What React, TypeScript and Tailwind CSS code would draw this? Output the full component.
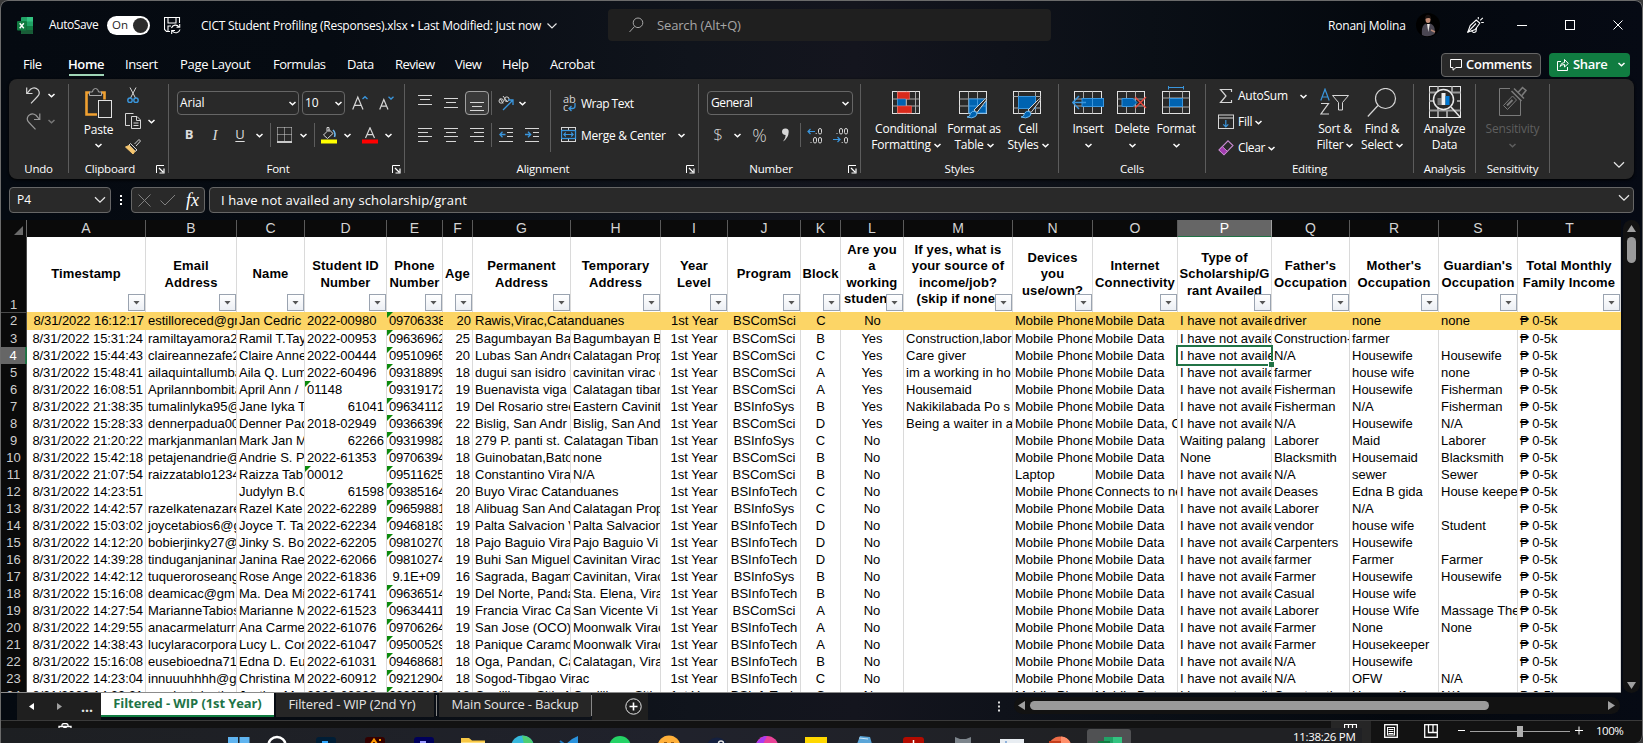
import React from 'react';

type P = { className?: string; children?: React.ReactNode };

const Chev = ({ className = '' }: P) => (
  <svg className={`w-[7px] h-[5px] shrink-0 ${className}`} viewBox="0 0 7 5" fill="none" stroke="currentColor" strokeWidth="1.5">
    <path d="M0.5 1 L3.5 3.7 L6.5 1" />
  </svg>
);

const BigChev = ({ className = '' }: P) => (
  <svg className={`w-[12px] h-[8px] shrink-0 ${className}`} viewBox="0 0 12 8" fill="none" stroke="#e4e4e4" strokeWidth="1.3">
    <path d="M1 1.2 L6 6.2 L11 1.2" />
  </svg>
);

const Sep = ({ className = '' }: P) => <div className={`w-px h-6 shrink-0 bg-[#5c5c5c] ${className}`} />;

const Icon = ({ w, h, className = '', children }: P & { w: number; h: number }) => (
  <svg width={w} height={h} viewBox={`0 0 ${w} ${h}`} className={`shrink-0 ${className}`} fill="none" stroke="#d6d6d6" strokeWidth="1">
    {children}
  </svg>
);

const Launcher = () => (
  <Icon w={9} h={9} className="ml-[5px] mr-[3px]">
    <path d="M0.5 8V0.5H8" stroke="#fff" />
    <path d="M3 3L7 7M8 3.5V8H3.5" stroke="#fff" strokeWidth="1.2" />
  </Icon>
);

function Group({ className, label, launcher, children }: P & { label: string; launcher?: boolean }) {
  return (
    <div className={`flex h-[89px] shrink-0 flex-col border-r border-[#5c5c5c] ${className}`}>
      {children}
      <div className="-mb-1 mt-auto flex h-4 items-center">
        <span className="flex-1 text-center text-[11.5px] tracking-[-0.2px]">{label}</span>
        {launcher && <Launcher />}
      </div>
    </div>
  );
}

function BigButton({ className, icon, a, b, chevron }: { className: string; icon: React.ReactNode; a: string; b?: string; chevron?: boolean }) {
  return (
    <div className={`flex flex-col items-center whitespace-nowrap leading-4 ${className}`}>
      <div className="flex h-[37px] w-full justify-center">{icon}</div>
      <div>{a}</div>
      <div className="flex h-4 items-center justify-center gap-[3px]">
        {b && <span>{b}</span>}
        {chevron && <Chev />}
      </div>
    </div>
  );
}

const Lines = ({ className = '', xs, dy = 0 }: { className?: string; xs: [number, number, number][]; dy?: number }) => (
  <Icon w={14} h={16} className={className}>
    {xs.map(([y, x1, x2]) => (
      <path key={y} d={`M${x1} ${y + dy + 0.5}H${x2}`} />
    ))}
  </Icon>
);

const GridLines = ({ x, y, w, h, cols, rows }: { x: number; y: number; w: number; h: number; cols: number[]; rows: number[] }) => (
  <>
    <rect x={x} y={y} width={w} height={h} stroke="#e2e2e2" />
    {cols.map((c) => <path key={'c' + c} d={`M${c} ${y}V${y + h}`} stroke="#a8a8a8" />)}
    {rows.map((r) => <path key={'r' + r} d={`M${x} ${r}H${x + w}`} stroke="#a8a8a8" />)}
  </>
);

const Brush = () => (
  <>
    <path d="M15 19L25.5 8.5Q28 6.5 27.5 9L18 21.5Z" fill="#292929" stroke="#d6d6d6" />
    <path d="M8 26Q11 26 11.5 22.5Q13 19 16.5 20.5Q19.5 23 16.5 25.5Q13 28 8 26Z" fill="#0063b1" stroke="#6cb8f0" />
  </>
);

const cols = 'grid grid-cols-[26px_119px_91px_68px_82px_56px_30px_98px_90px_67px_73px_40px_63px_109px_80px_85px_94px_78px_89px_79px_103px]';
const letters = 'ABCDEFGHIJKLMNOPQRST'.split('');

const heads: string[][] = [
  ['Timestamp'], ['Email', 'Address'], ['Name'], ['Student ID', 'Number'], ['Phone', 'Number'], ['Age'],
  ['Permanent', 'Address'], ['Temporary', 'Address'], ['Year', 'Level'], ['Program'], ['Block'],
  ['Are you', 'a', 'working', 'student?'], ['If yes, what is', 'your source of', 'income/job?', '(skip if none)'],
  ['Devices', 'you', 'use/own?'], ['Internet', 'Connectivity'], ['Type of', 'Scholarship/G', 'rant Availed'],
  ["Father's", 'Occupation'], ["Mother's", 'Occupation'], ["Guardian's", 'Occupation'], ['Total Monthly', 'Family Income'],
];

const MP = 'Mobile Phone';
const MD = 'Mobile Data';
const IH = 'I have not availe';
const CS = 'BSComSci';
const IS = 'BSInfoSys';
const IT = 'BSInfoTech';

// time, email, name, id, phone, age, permanent, temporary, program, block, working, job, device, internet, scholarship, father, mother, guardian
const rows: string[][] = [
  ['16:12:17', 'estilloreced@gr', 'Jan Cedric', '2022-00980', '09706338', '20', 'Rawis,Virac,Catanduanes', '', CS, 'C', 'No', '', MP, MD, IH, 'driver', 'none', 'none'],
  ['15:31:24', 'ramiltayamora2', 'Ramil T.Tay', '2022-00953', '09636962', '25', 'Bagumbayan Ba', 'Bagumbayan B', CS, 'B', 'Yes', 'Construction,labor', MP, MD, IH, 'Construction-', 'farmer', ''],
  ['15:44:43', 'claireannezafe2', 'Claire Anne', '2022-00444', '09510965', '20', 'Lubas San Andre', 'Calatagan Prop', CS, 'C', 'Yes', 'Care giver', MP, MD, IH, 'N/A', 'Housewife', 'Housewife'],
  ['15:48:41', 'ailaquintallumba', 'Aila Q. Lum', '2022-60496', '09318899', '18', 'dugui san isidro v', 'cavinitan virac c', CS, 'A', 'Yes', 'im a working in ho', MP, MD, IH, 'farmer', 'house wife', 'none'],
  ['16:08:51', 'Aprilannbombita', 'April Ann /', '01148', '09319172', '19', 'Buenavista viga c', 'Calatagan tibar', CS, 'A', 'Yes', 'Housemaid', MP, MD, IH, 'Fisherman', 'Housewife', 'Fisherman'],
  ['21:38:35', 'tumalinlyka95@', 'Jane Iyka T', '61041', '09634112', '19', 'Del Rosario stree', 'Eastern Cavinit', IS, 'B', 'Yes', 'Nakikilabada Po s', MP, MD, IH, 'Fisherman', 'N/A', 'Fisherman'],
  ['15:28:33', 'dennerpadua00', 'Denner Pad', '2018-02949', '09366396', '22', 'Bislig, San Andr', 'Bislig, San And', CS, 'D', 'Yes', 'Being a waiter in a', MP, 'Mobile Data, C', IH, 'N/A', 'Housewife', 'N/A'],
  ['21:20:22', 'markjanmanlan', 'Mark Jan M', '62266', '09319982', '18', '279 P. panti st. Calatagan Tiban', '', IS, 'C', 'No', '', MP, MD, 'Waiting palang', 'Laborer', 'Maid', 'Laborer'],
  ['15:42:18', 'petajenandrie@', 'Andrie S. P', '2022-61353', '09706394', '18', 'Guinobatan,Bato', 'none', CS, 'B', 'No', '', MP, MD, 'None', 'Blacksmith', 'Housemaid', 'Blacksmith'],
  ['21:07:54', 'raizzatablo1234', 'Raizza Tab', '00012', '09511625', '18', 'Constantino Vira', 'N/A', CS, 'B', 'No', '', 'Laptop', MD, IH, 'N/A', 'sewer', 'Sewer'],
  ['14:23:51', '', 'Judylyn B.C', '61598', '09385164', '20', 'Buyo Virac Catanduanes', '', IT, 'C', 'No', '', MP, 'Connects to ne', IH, 'Deases', 'Edna B gida', 'House keepe'],
  ['14:42:57', 'razelkatenazare', 'Razel Kate', '2022-62289', '09659881', '18', 'Alibuag San And', 'Calatagan Prop', IS, 'C', 'No', '', MP, MD, IH, 'Laborer', 'N/A', ''],
  ['15:03:02', 'joycetabios6@g', 'Joyce T. Ta', '2022-62234', '09468183', '19', 'Palta Salvacion V', 'Palta Salvacion', IT, 'D', 'No', '', MP, MD, IH, 'vendor', 'house wife', 'Student'],
  ['14:12:20', 'bobierjinky27@', 'Jinky S. Bo', '2022-62205', '09810270', '18', 'Pajo Baguio Vira', 'Pajo Baguio Vi', IT, 'D', 'No', '', MP, MD, IH, 'Carpenters', 'Housewife', ''],
  ['14:39:28', 'tinduganjaninar', 'Janina Rae', '2022-62066', '09810274', '19', 'Buhi San Miguel', 'Cavinitan Virac', IT, 'D', 'No', '', MP, MD, IH, 'farmer', 'Farmer', 'Farmer'],
  ['14:42:12', 'tuqueroroseang', 'Rose Ange', '2022-61836', '9.1E+09', '16', 'Sagrada, Bagam', 'Cavinitan, Virac', IS, 'B', 'No', '', MP, MD, IH, 'Farmer', 'Housewife', 'Housewife'],
  ['15:16:08', 'deamicac@gm', 'Ma. Dea Mi', '2022-61741', '09636514', '19', 'Del Norte, Panda', 'Sta. Elena, Vira', IT, 'B', 'No', '', MP, MD, IH, 'Casual', 'House wife', ''],
  ['14:27:54', 'MarianneTabios', 'Marianne M', '2022-61523', '09634411', '19', 'Francia Virac Ca', 'San Vicente Vi', CS, 'A', 'No', '', MP, MD, IH, 'Laborer', 'House Wife', 'Massage The'],
  ['14:29:55', 'anacarmelaturre', 'Ana Carme', '2022-61076', '09706264', '19', 'San Jose (OCO)', 'Moonwalk Virac', IT, 'A', 'No', '', MP, MD, IH, 'Farmer', 'None', 'None'],
  ['14:38:43', 'lucylaracorpora', 'Lucy L. Cor', '2022-61047', '09500529', '18', 'Panique Caramo', 'Moonwalk Virac', IT, 'A', 'No', '', MP, MD, IH, 'Farmer', 'Housekeeper', ''],
  ['15:16:08', 'eusebioedna71', 'Edna D. Eu', '2022-61031', '09468681', '18', 'Oga, Pandan, Ca', 'Calatagan, Vira', IT, 'B', 'No', '', MP, MD, IH, 'N/A', 'Housewife', ''],
  ['14:23:04', 'innuuuhhhh@gr', 'Christina M', '2022-60912', '09212904', '18', 'Sogod-Tibgao Virac', '', IT, 'C', 'No', '', MP, MD, IH, 'N/A', 'OFW', 'N/A'],
  ['14:29:21', 'maniestaiusti', 'Justine Ma', '2022-60898', '09305129', '18', 'Canlilban, Sitio M', 'Canlilban, Sitio', IT, 'C', 'No', '', MP, MD, IH, 'Construction', 'Housewife', 'N/A'],
];

function SheetRow({ r, i }: { r: string[]; i: number }) {
  const n = i + 2;
  const values = ['8/31/2022 ' + r[0], ...r.slice(1, 8), '1st Year', ...r.slice(8), '₱ 0-5k'];
  const spill = r[7] === '';
  const yellow = i === 0;
  return (
    <div className={`${cols} ${yellow ? 'h-[18px]' : 'h-[17px]'} shrink-0`}>
      <div
        className={`border-b text-center text-[13px] ${yellow ? 'border-t leading-[16px]' : 'leading-[17px]'} ${
          n === 4 ? 'border-b-[#8a8a8a] border-r-2 border-r-[#217346] bg-[#666] text-white' : 'border-r border-[#4a4a4a] bg-[#0a0a0a] text-[#cfcfcf]'
        }`}
      >
        {n}
      </div>
      {values.map((v, c) => {
        if (c === 7 && spill) return null;
        const right = c === 0 || c === 5 || (c === 3 && v.length === 5 && v[0] === '6') || (c === 4 && v.includes('E'));
        const center = c >= 8 && c <= 11;
        const flag = (c === 4 && !right) || (c === 3 && v.length === 5 && v[0] === '0');
        const sel = n === 4 && c === 15;
        return (
          <div
            key={c}
            className={`relative border-b ${yellow ? 'border-b-[#a39a80] bg-[#fcd566] leading-[18px]' : 'border-r border-[#dadada] bg-white leading-[17px]'} ${
              c === 6 && spill ? 'col-span-2' : ''
            } ${sel ? 'z-10' : ''}`}
          >
            <div
              className={`h-full overflow-hidden whitespace-pre px-[2px] ${right ? 'text-right' : center ? 'text-center' : ''} ${
                c === 0 ? 'tracking-[-0.08px]' : c === 4 ? 'tracking-[-0.2px]' : ''
              }`}
            >
              {v}
            </div>
            {flag && <div className="absolute left-0 top-0 h-[6px] w-[6px] bg-[#0c8a0c] [clip-path:polygon(0_0,100%_0,0_100%)]" />}
            {sel && (
              <div className="absolute -bottom-[2px] -left-[2px] -right-[2px] -top-[2px] border-2 border-[#217346]">
                <div className="absolute -bottom-[3px] -right-[3px] h-[6px] w-[6px] border-l border-t border-white bg-[#217346]" />
              </div>
            )}
          </div>
        );
      })}
    </div>
  );
}

function TitleBar() {
  return (
    <div className="flex h-[50px] items-center pl-[17px] text-[12px] text-white">
      <svg width="16" height="17" viewBox="0 0 16 17" className="shrink-0">
        <rect x="4" y="0" width="12" height="17" rx="1" fill="#21a366" />
        <rect x="10" y="0" width="6" height="4.5" fill="#33c481" />
        <rect x="4" y="4.5" width="6" height="4.5" fill="#107c41" />
        <rect x="4" y="9" width="12" height="8" rx="1" fill="#185c37" />
        <rect x="10" y="9" width="6" height="4" fill="#107c41" />
        <rect x="0" y="4" width="9.5" height="9.5" rx="1" fill="#107c41" />
        <path d="M2.7 6.3L6.8 11.3M6.8 6.3L2.7 11.3" stroke="#fff" strokeWidth="1.4" />
      </svg>
      <span className="ml-4 w-[50px] whitespace-nowrap tracking-[-0.4px]">AutoSave</span>
      <div className="ml-2 flex h-[19px] w-[43px] items-center justify-between rounded-full bg-white pl-[5px] pr-[2px] text-[#1e1e1e]">
        <span className="text-[11.5px]">On</span>
        <span className="h-[15px] w-[15px] rounded-full bg-[#2b2b2b]" />
      </div>
      <Icon w={17} h={17} className="ml-[14px]">
        <g stroke="#fff" strokeWidth="1.1">
          <path d="M6 14.5H2.5L0.5 12.5V0.5H15.5V6" />
          <path d="M4 0.5V6H12V0.5" />
          <path d="M4 14V9H7" />
          <path d="M7.5 11A4.2 4.2 0 0 1 15 10M15.7 7V10.3H12.5M16 12.5A4.2 4.2 0 0 1 8.5 14M7.7 17V13.5H11" />
        </g>
      </Icon>
      <span className="ml-[20px] mt-[2px] w-[342px] whitespace-nowrap text-[12px] tracking-[-0.25px]">CICT Student Profiling (Responses).xlsx • Last Modified: Just now</span>
      <BigChev className="ml-[3px] mt-px scale-90" />
      <div className="ml-[50px] flex h-8 w-[443px] items-center rounded bg-[#1f1f1f] pl-[21px] text-[13px] text-[#a6a6a6]">
        <Icon w={15} h={16}>
          <circle cx="9" cy="5.8" r="4.8" stroke="#a6a6a6" />
          <path d="M5.5 9.5L0.5 15" stroke="#a6a6a6" />
        </Icon>
        <span className="ml-[13px] mt-px tracking-[-0.15px]">Search (Alt+Q)</span>
      </div>
      <span className="ml-[277px] mt-[2px] w-[77px] whitespace-nowrap tracking-[-0.2px]">Ronanj Molina</span>
      <svg width="24" height="24" viewBox="0 0 24 24" className="ml-[11px] shrink-0">
        <circle cx="12" cy="12" r="12" fill="#000" />
        <path d="M6 22Q5 12 10 10.5L12 13L14 10.5Q20 12 18.5 21Q12 25 6 22Z" fill="#4a4652" />
        <path d="M11 11L12.3 19L13.8 11Z" fill="#e8e4e4" />
        <ellipse cx="12" cy="6.5" rx="2.5" ry="3.5" fill="#c08a74" />
        <path d="M9 6Q9 1.8 12 1.8T15 6Q13 3.8 9 6Z" fill="#1a1210" />
        <path d="M15 17L19 19" stroke="#b98a78" strokeWidth="1.5" />
      </svg>
      <Icon w={17} h={17} className="ml-[27px]">
        <g stroke="#fff" strokeWidth="1.1">
          <path d="M0.8 15.2L3.2 8.5L9.2 3L12.8 6.2L8.2 12.5Z" />
          <path d="M0.8 15.2L9 6.5M4.5 13.8Q6.5 16.8 9 14.5L9.5 11" />
          <path d="M11.3 0V2.2M13.2 3.3L15.8 0.8M14.2 5.5H16.8" />
        </g>
      </Icon>
      <div className="ml-[33px] h-px w-[10px] bg-white" />
      <div className="ml-[38px] h-[10px] w-[10px] border border-white" />
      <Icon w={10} h={10} className="ml-[38px]">
        <path d="M0.5 0.5L9.5 9.5M9.5 0.5L0.5 9.5" stroke="#fff" />
      </Icon>
    </div>
  );
}

function Tabs() {
  return (
    <div className="flex h-[29px] items-center pl-[23px] text-[13px] text-white">
      <span className="w-[19px] tracking-[-0.5px]">File</span>
      <span className="ml-[26px] w-[37px] font-semibold tracking-[-0.4px] shadow-[0_3px_0_-1px_#9fd5b7]">Home</span>
      <span className="ml-5 w-8 tracking-[-0.4px]">Insert</span>
      <span className="ml-[23px] w-[71px] whitespace-nowrap tracking-[-0.3px]">Page Layout</span>
      <span className="ml-[22px] w-[53px] tracking-[-0.5px]">Formulas</span>
      <span className="ml-[21px] w-[27px] tracking-[-0.4px]">Data</span>
      <span className="ml-[21px] w-[40px] tracking-[-0.5px]">Review</span>
      <span className="ml-5 w-[27px] tracking-[-0.5px]">View</span>
      <span className="ml-5 w-[27px] tracking-[-0.4px]">Help</span>
      <span className="ml-[21px] w-[46px] tracking-[-0.4px]">Acrobat</span>
      <div className="ml-auto flex h-6 w-[100px] items-center justify-center gap-1 rounded border border-[#666] bg-[#292929] font-semibold tracking-[-0.3px]">
        <Icon w={12} h={12}>
          <path d="M0.5 0.5H11.5V8.5H6L3 11.2V8.5H0.5Z" stroke="#fff" />
        </Icon>
        Comments
      </div>
      <div className="ml-2 mr-[13px] flex h-6 w-[81px] items-center rounded bg-[#107c41] pl-2 font-semibold tracking-[-0.3px]">
        <Icon w={12} h={13}>
          <path d="M4 3.5H0.5V12.5H10.5V9" stroke="#fff" />
          <path d="M3 8.5Q4 4.5 7.5 4.5V1.5L11.3 5.5L7.5 9V6.5Q4.5 6.5 3 8.5Z" stroke="#fff" />
        </Icon>
        <span className="ml-1">Share</span>
        <Chev className="ml-auto mr-[5px]" />
      </div>
    </div>
  );
}

function Ribbon() {
  return (
    <div className="mx-[9px] flex h-[100px] w-[1625px] rounded-lg bg-[#292929] pt-[5px] text-[11.5px] tracking-[-0.15px] text-white shadow-[0_1px_3px_#000]">
      <Group className="w-[60px]" label="Undo">
        <div className="mt-[2px] flex h-[18px] items-center pl-[17px]">
          <Icon w={15} h={17}>
            <path d="M0.7 0.5V6.5H6.5" strokeWidth="1.2" />
            <path d="M1 6.3L4.5 2.3Q8.5 -0.8 12 2.7Q14.8 6.5 11.5 9.5L5 16.3" strokeWidth="1.2" />
          </Icon>
          <Chev className="ml-[7px]" />
        </div>
        <div className="mt-[8px] flex h-[18px] items-center pl-[17px] text-[#777]">
          <Icon w={15} h={17}>
            <path d="M13.8 0.5V6.5H8" strokeWidth="1.2" stroke="#999" />
            <path d="M13.5 6.3L10 2.3Q6 -0.8 2.5 2.7Q-0.3 6.5 3 9.5L9.5 16.3" strokeWidth="1.2" stroke="#999" />
          </Icon>
          <Chev className="ml-[7px]" />
        </div>
      </Group>
      <Group className="w-[100px]" label="Clipboard" launcher>
        <div className="flex">
          <div className="ml-[14px] flex w-[31px] flex-col items-center">
            <Icon w={28} h={31} className="mt-[4px]">
              <path d="M12 26.5H1.5V4.500H5M16 4.500H19.5V11.5" stroke="#f0a030" strokeWidth="2.6" />
              <path d="M4.500 7.500V4H7.5Q7.500 0.500 10.500 0.500T13.500 4H16.500V7.500Z" fill="#292929" stroke="#a8a8a8" />
              <rect x="13.5" y="12.5" width="13" height="17" fill="#292929" stroke="#e2e2e2" />
            </Icon>
            <span className="mt-[3px] text-[12px] leading-4 tracking-[-0.25px]">Paste</span>
            <Chev className="mt-[5px]" />
          </div>
          <div className="ml-[11px] flex flex-col">
            <Icon w={16} h={17} className="mt-[3px]">
              <path d="M5 0.5L10.5 11M11 0.5L5.5 11" />
              <circle cx="5" cy="13.2" r="2.2" stroke="#3a96dd" strokeWidth="1.4" />
              <circle cx="11" cy="13.2" r="2.2" stroke="#3a96dd" strokeWidth="1.4" />
            </Icon>
            <div className="mt-[9px] flex items-center">
              <Icon w={17} h={17}>
                <path d="M5 12.5H0.5V0.5H8.5" />
                <path d="M6.5 3.5H12L15.5 7V15.5H6.5ZM11.5 3.5V7.5H15.5M8.5 10H13.5M8.5 12.5H13.5" />
              </Icon>
              <Chev className="ml-[6px]" />
            </div>
            <Icon w={17} h={16} className="mt-[9px]">
              <path d="M9.5 5L14 0.5L15.5 2L11 7" />
              <path d="M5.5 4.5L12 11L10 12.5L4 6Z" />
              <path d="M4 6.5L0.5 8L8 15L10 12.3Z" fill="#f6c66f" stroke="#f6c66f" />
            </Icon>
          </div>
        </div>
      </Group>
      <Group className="w-[236px]" label="Font" launcher>
        <div className="mt-[7px] flex h-6 items-center">
          <div className="ml-[8px] flex h-6 w-[122px] items-center justify-between rounded border border-[#666] pl-[2px] pr-[2px] text-[12px]">
            Arial <Chev />
          </div>
          <div className="ml-[3px] flex h-6 w-[43px] items-center justify-between rounded border border-[#666] pl-[2px] pr-[2px] text-[12px]">
            10 <Chev />
          </div>
          <Icon w={16} h={16} className="ml-[7px]">
            <path d="M0.7 14.5L5.8 2L11 14.5M2.5 10.3H9.2" strokeWidth="1.2" />
            <path d="M10.5 4L13 1.7L15.5 4" stroke="#3a96dd" strokeWidth="1.3" />
          </Icon>
          <Icon w={16} h={16} className="ml-[11px]">
            <path d="M0.7 14.5L4.8 4.5L9 14.5M2.2 11.2H7.5" strokeWidth="1.2" />
            <path d="M9.5 1.7L12 4L14.5 1.7" stroke="#3a96dd" strokeWidth="1.3" />
          </Icon>
        </div>
        <div className="mt-[8px] flex h-6 items-center text-[13px] text-[#dcdcdc]">
          <span className="ml-[13px] w-[14px] text-center font-bold">B</span>
          <span className="ml-[12px] w-[14px] text-center font-['Liberation_Serif',serif] text-[15px] italic">I</span>
          <span className="ml-[11px] w-[14px] text-center underline underline-offset-2">U</span>
          <Chev className="ml-[9px] text-white" />
          <Sep className="ml-[7px]" />
          <Icon w={16} h={16} className="ml-[6px]">
            <path d="M0.5 0.5H15M0.5 0.5V14M14.5 0.5V14M7.5 0.5V14M0.5 7.5H15" strokeDasharray="1 1" />
            <path d="M0 15H15" stroke="#fff" strokeWidth="1.5" />
          </Icon>
          <Chev className="ml-[7px] text-white" />
          <Sep className="ml-[7px]" />
          <Icon w={16} h={17} className="ml-[6px]">
            <path d="M2.5 8L8 2.5L12 6.5L6.5 11.5Z M8 5V0.5H6V4" />
            <path d="M12 3Q15 6 13.5 10" stroke="#6cb8f0" strokeWidth="1.6" />
            <rect x="0" y="12.5" width="16" height="4" fill="#ffff00" stroke="none" />
          </Icon>
          <Chev className="ml-[7px] text-white" />
          <Icon w={16} h={17} className="ml-[11px]">
            <path d="M3.5 11L8 0.8L12.5 11M5 7.6H11" strokeWidth="1.2" />
            <rect x="0" y="12.5" width="16" height="4" fill="#ff0000" stroke="none" />
          </Icon>
          <Chev className="ml-[7px] text-white" />
        </div>
      </Group>
      <Group className="w-[294px]" label="Alignment" launcher>
        <div className="flex">
          <div className="flex w-[145px] flex-col">
            <div className="mt-[7px] flex h-6 items-center">
              <Lines className="ml-[13px]" xs={[[0, 0, 14], [4, 2, 12], [9, 0, 14]]} />
              <Lines className="ml-[12px]" xs={[[3, 0, 14], [7, 2, 12], [12, 0, 14]]} />
              <div className="ml-[7px] flex h-6 w-6 items-center justify-center rounded border border-[#a0a0a0] bg-[#3a3a3a]">
                <Lines xs={[[7, 0, 14], [11, 2, 12], [15, 0, 14]]} />
              </div>
              <Sep className="ml-[2px]" />
              <Icon w={16} h={16} className="ml-[6px]">
                <circle cx="3.2" cy="6" r="2.2" />
                <path d="M5 8.5L2.2 3.5M5 1L9.5 7" />
                <circle cx="8.8" cy="4.2" r="2.3" />
                <path d="M5 15L15 5M15 10V5H10" stroke="#3a96dd" strokeWidth="1.3" />
              </Icon>
              <Chev className="ml-[5px]" />
            </div>
            <div className="mt-[8px] flex h-6 items-center">
              <Lines className="ml-[13px]" xs={[[1, 0, 14], [5, 0, 10], [9, 0, 14], [14, 0, 10]]} />
              <Lines className="ml-[12px]" xs={[[1, 0, 14], [5, 2, 12], [9, 0, 14], [14, 2, 12]]} />
              <Lines className="ml-[12px]" xs={[[1, 0, 14], [5, 4, 14], [9, 0, 14], [14, 4, 14]]} />
              <Sep className="ml-[7px]" />
              <Icon w={14} h={16} className="ml-[7px]">
                <path d="M0 1.5H14M8 5.5H14M8 9.5H14M0 14.5H14" />
                <path d="M6.5 7.5H1M3.5 4.8L0.8 7.5L3.5 10.2" stroke="#3a96dd" strokeWidth="1.3" />
              </Icon>
              <Icon w={14} h={16} className="ml-[12px]">
                <path d="M0 1.5H14M8 5.5H14M8 9.5H14M0 14.5H14" />
                <path d="M0 7.5H5.5M3 4.8L5.7 7.5L3 10.2" stroke="#3a96dd" strokeWidth="1.3" />
              </Icon>
            </div>
          </div>
          <div className="mt-[6px] h-[62px] w-px bg-[#5c5c5c]" />
          <div className="flex flex-col text-[12px]">
            <div className="mt-[7px] flex h-6 items-center whitespace-nowrap">
              <div className="ml-[12px] flex w-[14px] flex-col text-[11px] leading-[8px] text-[#d6d6d6]">
                <span>ab</span>
                <span className="flex">
                  c
                  <Icon w={8} h={9}>
                    <path d="M7 0V3Q7 5.5 4.5 5.5H1M3.5 3L1 5.5L3.5 8" stroke="#3a96dd" strokeWidth="1.3" />
                  </Icon>
                </span>
              </div>
              <span className="ml-1 mt-[2px] tracking-[-0.5px]">Wrap Text</span>
            </div>
            <div className="mt-[8px] flex h-6 items-center whitespace-nowrap">
              <Icon w={16} h={16} className="ml-[10px]">
                <rect x="0.5" y="0.5" width="14" height="14" />
                <path d="M7.5 0.5V15" />
                <rect x="0.5" y="3.5" width="14" height="8" fill="#292929" stroke="#3a96dd" strokeWidth="1.3" />
                <path d="M2.5 7.5H12.5M4.8 5.5L2.8 7.5L4.8 9.5M10.2 5.5L12.2 7.5L10.2 9.5" stroke="#3a96dd" strokeWidth="1.1" />
              </Icon>
              <span className="ml-1 mt-px w-[85px] tracking-[-0.25px]">Merge &amp; Center</span>
              <Chev className="ml-[12px]" />
            </div>
          </div>
        </div>
      </Group>
      <Group className="w-[162px]" label="Number" launcher>
        <div className="ml-[8px] mt-[7px] flex h-6 w-[146px] items-center justify-between rounded border border-[#666] px-[3px] text-[12px]">
          <span className="tracking-[-0.4px]">General</span> <Chev />
        </div>
        <div className="mt-[8px] flex h-6 items-center text-[#d6d6d6]">
          <span className="ml-[12px] w-[14px] text-center text-[17px] font-light">$</span>
          <Chev className="ml-[9px] text-white" />
          <span className="ml-[10px] w-[17px] text-center text-[18px] font-light">%</span>
          <Icon w={10} h={16} className="ml-[13px]">
            <path d="M1 4.5A3.2 3.2 0 1 1 7.7 5Q7.5 11 2 14.5Q5 11 4.6 8Q1 7.8 1 4.5Z" fill="#d6d6d6" stroke="none" />
          </Icon>
          <Sep className="ml-[9px]" />
          <Icon w={16} h={17} className="ml-[6px]">
            <path d="M8 4.5H1M3.5 2L1 4.5L3.5 7" stroke="#3a96dd" strokeWidth="1.2" />
            <rect x="11.5" y="1.5" width="3" height="5.5" rx="1.5" />
            <rect x="6.5" y="10.5" width="3" height="5.5" rx="1.5" />
            <rect x="11.500" y="10.500" width="3" height="5.500" rx="1.500" />
            <path d="M3.5 15.5H4.5M8.7 6.5H9.7" />
          </Icon>
          <Icon w={16} h={17} className="ml-[10px]">
            <path d="M0 12.5H7M4.5 10L7 12.5L4.5 15" stroke="#3a96dd" strokeWidth="1.2" />
            <rect x="6.5" y="1.5" width="3" height="5.5" rx="1.5" />
            <rect x="11.5" y="1.5" width="3" height="5.5" rx="1.5" />
            <rect x="11.5" y="10.5" width="3" height="5.5" rx="1.5" />
            <path d="M3.5 6.5H4.5M8.7 15.5H9.7" />
          </Icon>
        </div>
      </Group>
      <Group className="w-[198px] text-[12px]" label="Styles">
        <div className="flex">
          <BigButton className="ml-[10px] w-[70px] tracking-[-0.2px]" a="Conditional" b="Formatting" chevron icon={
            <Icon w={28} h={24} className="mt-[7px]">
              <GridLines x={0.5} y={0.5} w={27} h={22} cols={[5.5, 14.5, 23.5]} rows={[8, 15]} />
              <rect x="5.5" y="1" width="12" height="7" fill="#d92a1c" stroke="#f0695f" strokeWidth=".6" />
              <rect x="5.5" y="8" width="8" height="7" fill="#0063b1" stroke="#3a96dd" strokeWidth=".6" />
              <rect x="5.5" y="15" width="14" height="7" fill="#d92a1c" stroke="#f0695f" strokeWidth=".6" />
            </Icon>} />
          <BigButton className="w-[66px] tracking-[-0.25px]" a="Format as" b="Table" chevron icon={
            <Icon w={30} h={28} className="mt-[7px]">
              <GridLines x={0.5} y={0.5} w={27} h={22} cols={[9.5, 18.5]} rows={[8, 15]} />
              <rect x="10" y="8" width="17" height="14" fill="#0063b1" stroke="#3a96dd" />
              <path d="M18.5 8V22M10 15H27" stroke="#3a96dd" />
              <Brush />
            </Icon>} />
          <BigButton className="w-[42px] tracking-[-0.2px]" a="Cell" b="Styles" chevron icon={
            <Icon w={30} h={28} className="mt-[7px]">
              <GridLines x={0.5} y={0.5} w={27} h={22} cols={[5.5, 22.5]} rows={[5.5, 17]} />
              <rect x="5.5" y="5.5" width="17" height="12" fill="#0063b1" stroke="#3a96dd" />
              <Brush />
            </Icon>} />
        </div>
      </Group>
      <Group className="w-[147px] text-[12px]" label="Cells">
        <div className="flex">
          <BigButton className="ml-[7px] w-[44px] tracking-[-0.2px]" a="Insert" chevron icon={
            <Icon w={32} h={24} className="mt-[7px]">
              <GridLines x={2.5} y={0.5} w={27} h={22} cols={[11.5, 20.5]} rows={[8, 15]} />
              <rect x="10" y="7.5" width="21.5" height="8" fill="#0063b1" stroke="#3a96dd" />
              <path d="M20.5 8V15" stroke="#3a96dd" />
              <path d="M14 11.5H1M7 5L0.8 11.5L7 18" stroke="#3a96dd" strokeWidth="1.5" />
            </Icon>} />
          <BigButton className="w-[44px] tracking-[-0.2px]" a="Delete" chevron icon={
            <Icon w={30} h={24} className="mt-[7px]">
              <GridLines x={0.5} y={0.5} w={27} h={22} cols={[9.5, 18.5]} rows={[8, 15]} />
              <path d="M5 7.5H16L20 11.5L16 15.5H5Z" fill="#0063b1" stroke="#3a96dd" />
              <path d="M18 6L29 17M29 6L18 17" stroke="#ef4b40" strokeWidth="1.4" />
            </Icon>} />
          <BigButton className="w-[44px] tracking-[-0.2px]" a="Format" chevron icon={
            <Icon w={28} h={29} className="mt-[2px]">
              <GridLines x={0.5} y={5.5} w={27} h={22} cols={[7.5, 20.5]} rows={[12, 21]} />
              <rect x="7.5" y="12.5" width="13" height="8" fill="#0063b1" stroke="#3a96dd" />
              <path d="M6.5 1.5H21.5M6.5 0V3.5M21.5 0V3.5" stroke="#3a96dd" />
            </Icon>} />
        </div>
      </Group>
      <Group className="w-[208px] text-[12px]" label="Editing">
        <div className="flex">
          <div className="-mt-px ml-[12px] flex w-[92px] flex-col tracking-[-0.25px]">
            <div className="flex h-[26px] items-center">
              <Icon w={16} h={16}>
                <path d="M13.5 4V1.5H2.5L8 8L2.5 14.5H13.5V12" strokeWidth="1.2" />
              </Icon>
              <span className="ml-1 w-[50px]">AutoSum</span>
              <Chev className="ml-[12px]" />
            </div>
            <div className="flex h-[26px] items-center">
              <Icon w={16} h={16}>
                <rect x="0.5" y="1" width="15" height="13.5" />
                <path d="M0.5 4H15.5" />
                <path d="M7.8 6V13M5.3 10.3L7.8 12.8L10.3 10.3" stroke="#3a96dd" strokeWidth="1.2" />
              </Icon>
              <span className="ml-1 mr-[3px]">Fill</span>
              <Chev />
            </div>
            <div className="flex h-[26px] items-center">
              <Icon w={16} h={16}>
                <path d="M1 10L10 0.8L15 5.5L6 14.8Z" stroke="#c78ad0" strokeWidth="1.1" />
                <path d="M1 10L4.3 6.5L9.3 11.3L6 14.8Z" fill="#a23bb0" stroke="#c78ad0" />
              </Icon>
              <span className="ml-1 mr-[3px] tracking-[-0.4px]">Clear</span>
              <Chev />
            </div>
          </div>
          <BigButton className="w-[50px] tracking-[-0.2px]" a="Sort &" b="Filter" chevron icon={
            <Icon w={30} h={28} className="mt-[4px]">
              <path d="M0.8 12.5L5 1.2L9.2 12.5M2.2 9H7.8" stroke="#3a96dd" strokeWidth="1.2" />
              <path d="M1 15.5H8.5L1 26H9" strokeWidth="1.2" />
              <path d="M12.5 7.5H28.5L22.5 14.5V22H18.5V14.5Z" />
            </Icon>} />
          <BigButton className="w-[44px] tracking-[-0.2px]" a="Find &" b="Select" chevron icon={
            <Icon w={30} h={30} className="mt-[4px]">
              <circle cx="18.5" cy="10.5" r="10" strokeWidth="1.2" />
              <path d="M11 17.5L0.8 28.5" strokeWidth="1.2" />
            </Icon>} />
        </div>
      </Group>
      <Group className="w-[62px] text-[12px]" label="Analysis">
        <BigButton className="w-full tracking-[-0.2px]" a="Analyze" b="Data" icon={
          <Icon w={32} h={32} className="mt-[2px]">
            <rect x="0.5" y="0.5" width="31" height="31" stroke="#e8e8e8" />
            <path d="M0.5 6.5H31.5M0.5 24.5H31.5M9 0.5V31M23 0.5V6M18 24V31M0.5 15H8M28 15H31" stroke="#999" strokeWidth="2" />
            <circle cx="14.5" cy="13.5" r="10" fill="#292929" stroke="#e8e8e8" strokeWidth="1.5" />
            <path d="M22 21L31.5 31.5" stroke="#e8e8e8" strokeWidth="1.5" />
            <rect x="8.5" y="12" width="4" height="7" fill="#777" stroke="none" />
            <rect x="12.5" y="7" width="4" height="12" fill="#eee" stroke="none" />
            <rect x="16.5" y="10" width="4" height="9" fill="#0078d4" stroke="none" />
          </Icon>} />
      </Group>
      <Group className="w-[74px] text-[12px]" label="Sensitivity">
        <BigButton className="w-full tracking-[-0.2px] text-[#5f5f5f]" a="Sensitivity" chevron icon={
          <Icon w={28} h={32} className="mt-[1px]">
            <path d="M11 3.500H0.500V30.500H21.500V15" stroke="#7a7a7a" />
            <path d="M4.500 20.500L13.500 11L17.500 15L8.500 24.500Z" stroke="#7a7a7a" />
            <path d="M8 20.500L13.500 15" stroke="#7a7a7a" strokeWidth="2" />
            <path d="M12.500 6L22.500 16M15 3.500L25 13.500" stroke="#7a7a7a" strokeWidth="1.6" />
            <path d="M19 7.500L23.500 2.500L27 5.500L22.500 11" stroke="#7a7a7a" strokeWidth="1.6" />
          </Icon>} />
      </Group>
      <div className="flex flex-1 items-end justify-end pb-[10px] pr-[9px]">
        <BigChev />
      </div>
    </div>
  );
}

function FormulaBar() {
  return (
    <div className="mb-[7px] mt-[8px] flex h-[26px] items-center pl-[9px] text-[12.5px] text-white">
      <div className="flex h-[26px] w-[102px] items-center justify-between rounded border border-[#666] bg-[#292929] pl-[7px] pr-[4px]">
        <span className="text-[12px]">P4</span>
        <BigChev />
      </div>
      <Icon w={2} h={12} className="ml-[9px]">
        <path d="M1 1V3M1 5V7M1 9V11" stroke="#fff" strokeWidth="2" />
      </Icon>
      <div className="ml-[9px] flex h-[26px] w-[74px] items-center rounded border border-[#666] bg-[#292929] pl-[6px]">
        <Icon w={13} h={13}>
          <path d="M0.5 0.5L12.5 12.5M12.5 0.5L0.5 12.5" stroke="#808080" />
        </Icon>
        <Icon w={16} h={12} className="ml-[9px]">
          <path d="M0.5 6.5L5 11L15 1" stroke="#808080" />
        </Icon>
        <span className="ml-[10px] font-['Liberation_Serif',serif] text-[18px] italic leading-none">fx</span>
      </div>
      <div className="ml-[4px] flex h-[26px] w-[1425px] items-center justify-between rounded border border-[#666] bg-[#292929] pl-[11px] pr-[3px]">
        <span className="mt-px text-[13px] tracking-[0.13px]">I have not availed any scholarship/grant</span>
        <BigChev className="mb-1" />
      </div>
    </div>
  );
}

function Sheet() {
  return (
    <div className="flex h-[473px]">
      <div className="ml-px flex h-[473px] w-[1620px] flex-col overflow-hidden border-b border-[#8b8b8b] font-['Liberation_Sans',Arial,sans-serif] text-[13px] text-black">
        <div className={`${cols} h-[17px] shrink-0 bg-[#0a0a0a] text-center text-[14px] leading-[16px] text-[#d4d4d4]`}>
          <div className="flex items-end justify-end border-b border-r border-[#6a6a6a] pb-[2px] pr-[3px]">
            <div className="h-[9px] w-[9px] bg-[#6a6a6a] [clip-path:polygon(100%_0,100%_100%,0_100%)]" />
          </div>
          {letters.map((l) => (
            <div
              key={l}
              className={l === 'P' ? 'border-b-2 border-r border-b-[#217346] border-r-[#a0a0a0] bg-[#666] text-white' : l === 'T' ? 'border-b border-[#8b8b8b]' : 'border-b border-r border-b-[#8b8b8b] border-r-[#5a5a5a]'}
            >
              {l}
            </div>
          ))}
        </div>
        <div className={`${cols} h-[75px] shrink-0`}>
          <div className="flex items-end justify-center border-r border-[#4a4a4a] bg-[#0a0a0a] leading-[15px] text-[#cfcfcf]">1</div>
          {heads.map((h, c) => (
            <div key={c} className="relative flex flex-col items-center justify-center overflow-hidden whitespace-nowrap border-r border-[#dadada] bg-white text-[13px] font-bold leading-[16.5px] tracking-[0.15px]">
              {h.map((t) => <span key={t}>{t}</span>)}
              <div className="absolute bottom-[1px] right-0 flex h-[17px] w-[17px] items-center justify-center border border-[#9aa3b0] bg-gradient-to-b from-white to-[#eceff4]">
                <div className="h-[4px] w-[7px] bg-[#555] [clip-path:polygon(0_0,100%_0,50%_100%)]" />
              </div>
            </div>
          ))}
        </div>
        {rows.map((r, i) => <SheetRow key={i} r={r} i={i} />)}
      </div>
      <div className="ml-[2px] flex w-[17px] flex-col items-center rounded-full bg-[#121212] pt-[5px]">
        <div className="h-[7px] w-[9px] bg-[#a0a0a0] [clip-path:polygon(50%_0,100%_100%,0_100%)]" />
        <div className="mt-[5px] h-[26px] w-[9px] rounded-full bg-[#9a9a9a]" />
        <div className="mb-[4px] mt-auto h-[7px] w-[9px] bg-[#a0a0a0] [clip-path:polygon(0_0,100%_0,50%_100%)]" />
      </div>
    </div>
  );
}

function SheetTabs() {
  return (
    <div className="flex h-[27px] items-start pl-[17px] text-[12.5px] text-[#e4e4e4]">
      <div className="flex h-[27px] w-[84px] items-center bg-[#1f1f1f] pl-[12px]">
        <div className="h-[7px] w-[5px] bg-white [clip-path:polygon(100%_0,100%_100%,0_50%)]" />
        <div className="ml-[23px] h-[7px] w-[5px] bg-[#a0a0a0] [clip-path:polygon(0_0,100%_50%,0_100%)]" />
        <span className="ml-[19px] text-[14px] font-bold leading-none">...</span>
      </div>
      <div className="flex h-[24px] w-[173px] items-center justify-center whitespace-nowrap border-b-2 border-[#107c41] bg-white text-[13px] font-bold tracking-[-0.1px] text-[#217346]">Filtered - WIP (1st Year)</div>
      <div className="ml-[2px] flex h-[24px] w-[158px] items-center justify-center whitespace-nowrap bg-[#262626] pr-[6px] text-[13px] tracking-[-0.15px]">Filtered - WIP (2nd Yr)</div>
      <div className="ml-[2px] mt-[2px] h-[21px] w-px bg-[#888]" />
      <div className="ml-[2px] flex h-[24px] w-[152px] items-center justify-center whitespace-nowrap bg-[#262626] text-[13px] tracking-[-0.2px]">Main Source - Backup</div>
      <div className="mt-[2px] h-[21px] w-px bg-[#888]" />
      <div className="flex h-[27px] w-[56px] items-center bg-[#1f1f1f] pl-[33px]">
        <Icon w={17} h={17}>
          <circle cx="8.5" cy="8.5" r="7.7" stroke="#e4e4e4" />
          <path d="M8.5 4.5V12.5M4.5 8.5H12.5" stroke="#fff" strokeWidth="1.6" />
        </Icon>
      </div>
      <Icon w={2} h={11} className="ml-[350px] mt-[8px]">
        <path d="M1 0.5V2.5M1 4.5V6.5M1 8.5V10.5" stroke="#ddd" strokeWidth="2" />
      </Icon>
      <div className="ml-[14px] mt-[4px] flex h-[17px] w-[606px] items-center rounded-full bg-[#121212] pl-[4px] pr-[5px]">
        <div className="h-[9px] w-[7px] bg-[#a0a0a0] [clip-path:polygon(100%_0,100%_100%,0_50%)]" />
        <div className="ml-[5px] h-[9px] w-[459px] rounded-full bg-[#9a9a9a]" />
        <div className="ml-auto h-[9px] w-[7px] bg-[#a0a0a0] [clip-path:polygon(0_0,100%_50%,0_100%)]" />
      </div>
    </div>
  );
}

function Taskbar() {
  return (
    <div className="flex h-[15px] w-[1362px] overflow-hidden bg-[linear-gradient(90deg,#1d1f22,#20222c_50%,#202124_80%)] pt-[8px]">
      <svg width="1293" height="7" viewBox="0 0 1293 7" className="shrink-0 overflow-visible">
        <path d="M228 1H238V8H228ZM239.500 1H249.500V8H239.500Z" fill="#5fb4f0" />
        <circle cx="277" cy="9.500" r="8.500" fill="none" stroke="#fff" strokeWidth="2.500" />
        <rect x="316" y="1" width="20" height="12" rx="3" fill="#001e36" />
        <path d="M322 6H328" stroke="#31a8ff" strokeWidth="2" />
        <rect x="365" y="1" width="20" height="12" rx="3" fill="#330000" />
        <path d="M371 8L374 3.500L377 8M380 3V5" stroke="#ff9a00" strokeWidth="2" fill="none" />
        <rect x="414" y="1" width="20" height="12" rx="3" fill="#00005b" />
        <path d="M420 6H426" stroke="#9999ff" strokeWidth="2" />
        <path d="M461 2H469L472 4.500H485V8H461Z" fill="#f8c845" />
        <path d="M461 6H485V8H461Z" fill="#ffdf7d" />
        <circle cx="522.500" cy="11" r="11.500" fill="#37b8dc" />
        <path d="M522 -0.500Q531 0 533.500 8H524Z" fill="#4fce72" />
        <path d="M572 3L578 0V8H566Z" fill="#2a92dd" />
        <path d="M560 5L564 8" stroke="#1f7cc4" strokeWidth="2" />
        <circle cx="620" cy="11" r="11" fill="#25d366" />
        <circle cx="669" cy="11" r="11.500" fill="#ffb03a" />
        <path d="M664 7H667M671 7H674" stroke="#9b5c10" strokeWidth="2" />
        <circle cx="717" cy="12" r="10.500" fill="#14203f" />
        <circle cx="721" cy="7.500" r="2.500" fill="none" stroke="#e8e8e8" strokeWidth="1.500" />
        <circle cx="767" cy="11.500" r="11.500" fill="#e94398" />
        <path d="M757 6Q761 0 767 0L763 8H756Z" fill="#a83bf0" />
        <path d="M805 1H827V8H805Z" fill="#ffd800" />
        <path d="M860 0L870 1L872 8H857Z" fill="#5aa5d8" />
        <path d="M859 2L868 3" stroke="#c8e6fa" />
        <rect x="903" y="1" width="21" height="12" rx="3" fill="#b30b00" />
        <path d="M913.500 4V8" stroke="#fff" strokeWidth="1.500" />
        <path d="M955 1L960 3H966L971 1V8H955Z" fill="#7d858c" />
        <path d="M1000 3H1024V8H1000Z" fill="#e8edf2" />
        <path d="M1006 5V8" stroke="#3b78c4" />
        <circle cx="1060" cy="12" r="11.500" fill="#ed6c47" />
        <path d="M1061 0.500A11.500 11.500 0 0 1 1071 8H1061Z" fill="#ff8f6b" />
        <rect x="1049" y="5" width="12" height="4" fill="#c43e1c" />
        <path d="M1087 8V-4Q1087 -7 1090 -7H1128Q1131 -7 1131 -4V8Z" fill="#505153" />
        <path d="M1104 1H1122V8H1104Z" fill="#21a366" />
        <path d="M1113 1H1122V8H1113Z" fill="#33c481" />
        <path d="M1098 5H1110V8H1098Z" fill="#107c41" />
      </svg>
      <span className="-mt-[7px] whitespace-nowrap text-[11.5px] leading-[16px] tracking-[-0.3px] text-white">11:38:26 PM</span>
    </div>
  );
}

function StatusBar() {
  return (
    <div className="flex h-[23px] rounded-br-lg border-t border-[#3a3a3a] bg-[#121212]">
      <div className="flex w-[1362px] flex-col">
        <div className="flex h-[7px] overflow-hidden pl-[58px]">
          <Icon w={14} h={12} className="mt-[2px]">
            <path d="M1 6V3.500H13V6M4 3V2Q4 0.500 7 0.500T10 2V3M5 6L7 3.500L9 6" stroke="#fff" strokeWidth="1.300" />
          </Icon>
          <div className="ml-[1259px] h-[7px] w-[31px] bg-[#262626] pl-[13px] pt-[3px]">
            <Icon w={13} h={12}>
              <path d="M0.500 12V0.500H12.500V12M4.500 0.500V12M8.500 0.500V12" stroke="#fff" strokeWidth="1.200" />
            </Icon>
          </div>
        </div>
        <Taskbar />
      </div>
      <div className="flex flex-1 text-[11.5px] text-white">
        <div className="h-[22px] w-[9px] bg-[#262626]" />
        <Icon w={14} h={14} className="ml-[13px] mt-[3px]">
          <rect x="0.700" y="0.700" width="12.600" height="12.600" stroke="#fff" strokeWidth="1.300" />
          <rect x="3.500" y="3.500" width="7" height="7.500" stroke="#fff" />
          <path d="M4.500 5.500H9.500M4.500 7.500H9.500M4.500 9.500H9.500" stroke="#fff" />
        </Icon>
        <Icon w={14} h={14} className="ml-[26px] mt-[3px]">
          <rect x="0.700" y="0.700" width="12.600" height="12.600" stroke="#fff" strokeWidth="1.300" />
          <path d="M4.500 0.500V8.500H9V0.500M9 8.500H13" stroke="#fff" strokeWidth="1.300" />
        </Icon>
        <Icon w={126} h={14} className="ml-[19px] mt-[3px]">
          <path d="M1 6.500H8M118 6.500H126M122 2.500V10.500" stroke="#fff" />
          <path d="M13 7.500H113" stroke="#a0a0a0" />
          <rect x="60" y="2" width="6" height="11" fill="#b0b0b0" stroke="none" />
        </Icon>
        <span className="ml-[13px] leading-[19px] tracking-[-0.5px]">100%</span>
      </div>
    </div>
  );
}

export default function App() {
  return (
    <div className="relative h-[743px] w-[1643px] overflow-hidden bg-[#3a3a3a] font-['Open_Sans','Noto_Sans',sans-serif]">
      <div className="flex h-[743px] w-[1643px] flex-col overflow-hidden rounded-t-lg rounded-br-lg bg-[linear-gradient(90deg,#050a11,#060b12_20%,#10141c_42%,#14151e_52%,#0a0f16_70%,#04080e_85%,#060a14)]">
        <TitleBar />
        <Tabs />
        <Ribbon />
        <FormulaBar />
        <Sheet />
        <SheetTabs />
        <StatusBar />
      </div>
      <div className="pointer-events-none absolute inset-0 rounded-t-lg rounded-br-lg border-l border-r border-t border-[#6b6b6b]" />
    </div>
  );
}
